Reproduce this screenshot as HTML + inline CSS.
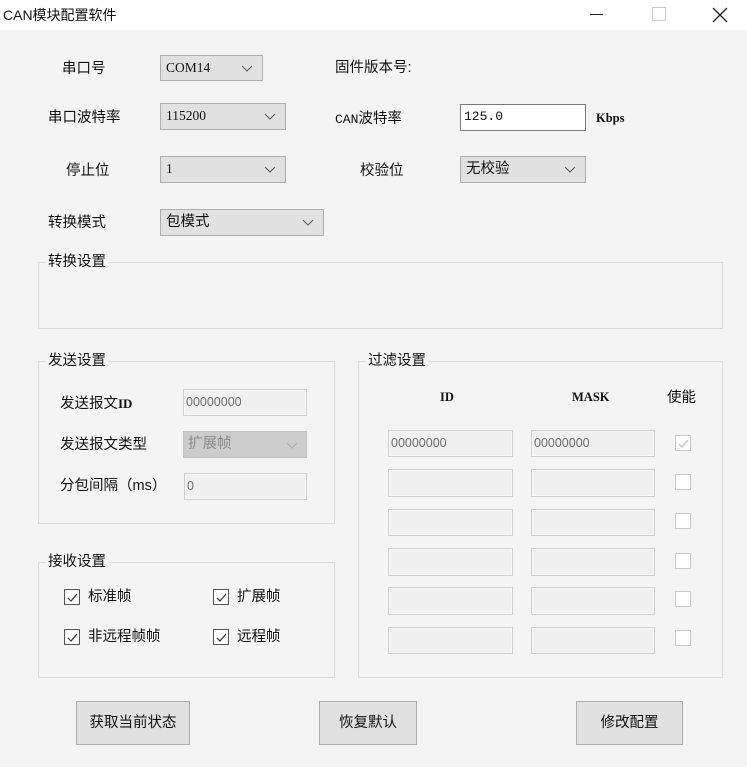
<!DOCTYPE html>
<html><head><meta charset="utf-8"><style>
*{margin:0;padding:0;box-sizing:border-box}
body{width:747px;height:767px;background:#f4f4f4;position:relative;overflow:hidden;font-family:"Liberation Sans","Noto Sans CJK SC",sans-serif;font-size:14px;color:#111}
.a{position:absolute;white-space:nowrap}
.tb{left:0;top:0;width:747px;height:30px;background:#fff}
.lbl{font-size:14.5px;line-height:18px}
.cb{position:absolute;background:#e1e1e1;border:1px solid #adadad;font-family:"Liberation Serif","Noto Serif CJK SC",serif;font-size:13.5px;padding-left:5px;line-height:24px}
.cb .ar{position:absolute;right:9px;top:7px;width:12px;height:10px}
.in{position:absolute;background:#f0f0f0;border:1px solid #cfcfcf;box-shadow:inset 0 0 0 1px #f7f7f7;font-size:12.5px;color:#6d6d6d;padding-left:2px;line-height:24px}
.gb{position:absolute;border:1px solid #dcdcdc}
.gt{position:absolute;background:#f4f4f4;font-size:14.5px;line-height:18px;padding:0 2px}
.ck{position:absolute;width:16px;height:16px;border:1px solid #555;background:#fff}
.ck.d{border-color:#c8c8c8}
.bt{position:absolute;background:#e1e1e1;border:1px solid #adadad;font-size:14.5px;text-align:center}
.mono{font-family:"Liberation Serif","Noto Serif CJK SC",serif;font-weight:bold;font-size:12.5px}
</style></head><body>
<div class="a tb"></div>
<div class="a" style="left:3px;top:5px;font-size:14px;">CAN模块配置软件</div>
<div class="a" style="left:590px;top:14px;width:13px;height:1px;background:#222"></div>
<div class="a" style="left:652px;top:7px;width:14px;height:14px;border:1px solid #ccc"></div>
<svg class="a" style="left:712px;top:7px" width="16" height="16"><path d="M1 1L15 15M15 1L1 15" stroke="#222" stroke-width="1.3"/></svg>

<div class="a lbl" style="left:62px;top:60px">串口号</div>
<div class="cb" style="left:160px;top:55px;width:103px;height:26px">COM14<svg class="ar" viewBox="0 0 12 10"><path d="M1 3l5 5 5-5" fill="none" stroke="#555"/></svg></div>
<div class="a lbl" style="left:335px;top:59px">固件版本号:</div>

<div class="a lbl" style="left:48px;top:109px">串口波特率</div>
<div class="cb" style="left:160px;top:103px;width:126px;height:27px">115200<svg class="ar" viewBox="0 0 12 10"><path d="M1 3l5 5 5-5" fill="none" stroke="#555"/></svg></div>
<div class="a lbl" style="left:335px;top:110px"><span style="font-family:'Liberation Mono',monospace;font-size:13px">CAN</span>波特率</div>
<div class="a" style="left:460px;top:104px;width:126px;height:27px;background:#fff;border:1px solid #7a7a7a;font-family:'Liberation Mono',monospace;font-size:13px;line-height:23px;padding-left:3px">125.0</div>
<div class="a mono" style="left:596px;top:111px">Kbps</div>

<div class="a lbl" style="left:66px;top:162px">停止位</div>
<div class="cb" style="left:160px;top:156px;width:126px;height:27px">1<svg class="ar" viewBox="0 0 12 10"><path d="M1 3l5 5 5-5" fill="none" stroke="#555"/></svg></div>
<div class="a lbl" style="left:360px;top:162px">校验位</div>
<div class="cb" style="left:460px;top:156px;width:126px;height:27px;font-family:'Liberation Sans','Noto Sans CJK SC',sans-serif;font-size:14.5px">无校验<svg class="ar" viewBox="0 0 12 10"><path d="M1 3l5 5 5-5" fill="none" stroke="#555"/></svg></div>

<div class="a lbl" style="left:48px;top:214px">转换模式</div>
<div class="cb" style="left:160px;top:209px;width:164px;height:27px;font-family:'Liberation Sans','Noto Sans CJK SC',sans-serif;font-size:14.5px">包模式<svg class="ar" viewBox="0 0 12 10"><path d="M1 3l5 5 5-5" fill="none" stroke="#555"/></svg></div>

<div class="gb" style="left:38px;top:262px;width:685px;height:67px"></div>
<div class="gt" style="left:46px;top:253px">转换设置</div>

<div class="gb" style="left:38px;top:361px;width:297px;height:163px"></div>
<div class="gt" style="left:46px;top:352px">发送设置</div>
<div class="a lbl" style="left:60px;top:395px">发送报文<span class="mono" style="font-size:13px">ID</span></div>
<div class="in" style="left:183px;top:389px;width:124px;height:27px">00000000</div>
<div class="a lbl" style="left:60px;top:436px">发送报文类型</div>
<div class="a" style="left:183px;top:431px;width:124px;height:27px;background:#cccccc;border:1px solid #bfbfbf;color:#8a8a8a;font-size:14.5px;line-height:25px;padding-left:4px">扩展帧<svg style="position:absolute;right:8px;top:8px" width="12" height="10"><path d="M1 3l5 5 5-5" fill="none" stroke="#aaa"/></svg></div>
<div class="a lbl" style="left:60px;top:477px">分包间隔（ms）</div>
<div class="in" style="left:184px;top:473px;width:123px;height:27px">0</div>

<div class="gb" style="left:38px;top:562px;width:297px;height:116px"></div>
<div class="gt" style="left:46px;top:553px">接收设置</div>
<svg width="0" height="0" style="position:absolute"><defs><path id="tk" d="M3 8l3 3 6-7" fill="none" stroke="#333" stroke-width="1.2"/></defs></svg>
<div class="ck" style="left:64px;top:589px"><svg width="14" height="14"><use href="#tk"/></svg></div>
<div class="a lbl" style="left:88px;top:588px">标准帧</div>
<div class="ck" style="left:213px;top:589px"><svg width="14" height="14"><use href="#tk"/></svg></div>
<div class="a lbl" style="left:237px;top:588px">扩展帧</div>
<div class="ck" style="left:64px;top:629px"><svg width="14" height="14"><use href="#tk"/></svg></div>
<div class="a lbl" style="left:88px;top:628px">非远程帧帧</div>
<div class="ck" style="left:213px;top:629px"><svg width="14" height="14"><use href="#tk"/></svg></div>
<div class="a lbl" style="left:237px;top:628px">远程帧</div>

<div class="gb" style="left:358px;top:361px;width:365px;height:317px"></div>
<div class="gt" style="left:366px;top:352px">过滤设置</div>
<div class="a mono" style="left:440px;top:390px">ID</div>
<div class="a mono" style="left:572px;top:390px">MASK</div>
<div class="a lbl" style="left:667px;top:389px">使能</div>

<div class="in" style="left:388px;top:430px;width:125px;height:27px">00000000</div>
<div class="in" style="left:531px;top:430px;width:124px;height:27px">00000000</div>
<div class="ck d" style="left:675px;top:435px"><svg width="14" height="14"><path d="M3 8l3 3 6-7" fill="none" stroke="#bbb" stroke-width="1.2"/></svg></div>

<div class="in" style="left:388px;top:469px;width:125px;height:28px"></div>
<div class="in" style="left:531px;top:469px;width:124px;height:28px"></div>
<div class="ck d" style="left:675px;top:474px"></div>
<div class="in" style="left:388px;top:509px;width:125px;height:27px"></div>
<div class="in" style="left:531px;top:509px;width:124px;height:27px"></div>
<div class="ck d" style="left:675px;top:513px"></div>
<div class="in" style="left:388px;top:548px;width:125px;height:28px"></div>
<div class="in" style="left:531px;top:548px;width:124px;height:28px"></div>
<div class="ck d" style="left:675px;top:553px"></div>
<div class="in" style="left:388px;top:587px;width:125px;height:28px"></div>
<div class="in" style="left:531px;top:587px;width:124px;height:28px"></div>
<div class="ck d" style="left:675px;top:591px"></div>
<div class="in" style="left:388px;top:627px;width:125px;height:27px"></div>
<div class="in" style="left:531px;top:627px;width:124px;height:27px"></div>
<div class="ck d" style="left:675px;top:630px"></div>

<div class="bt" style="left:76px;top:701px;width:114px;height:44px;line-height:42px">获取当前状态</div>
<div class="bt" style="left:319px;top:701px;width:98px;height:44px;line-height:42px">恢复默认</div>
<div class="bt" style="left:576px;top:701px;width:107px;height:44px;line-height:42px">修改配置</div>
</body></html>
